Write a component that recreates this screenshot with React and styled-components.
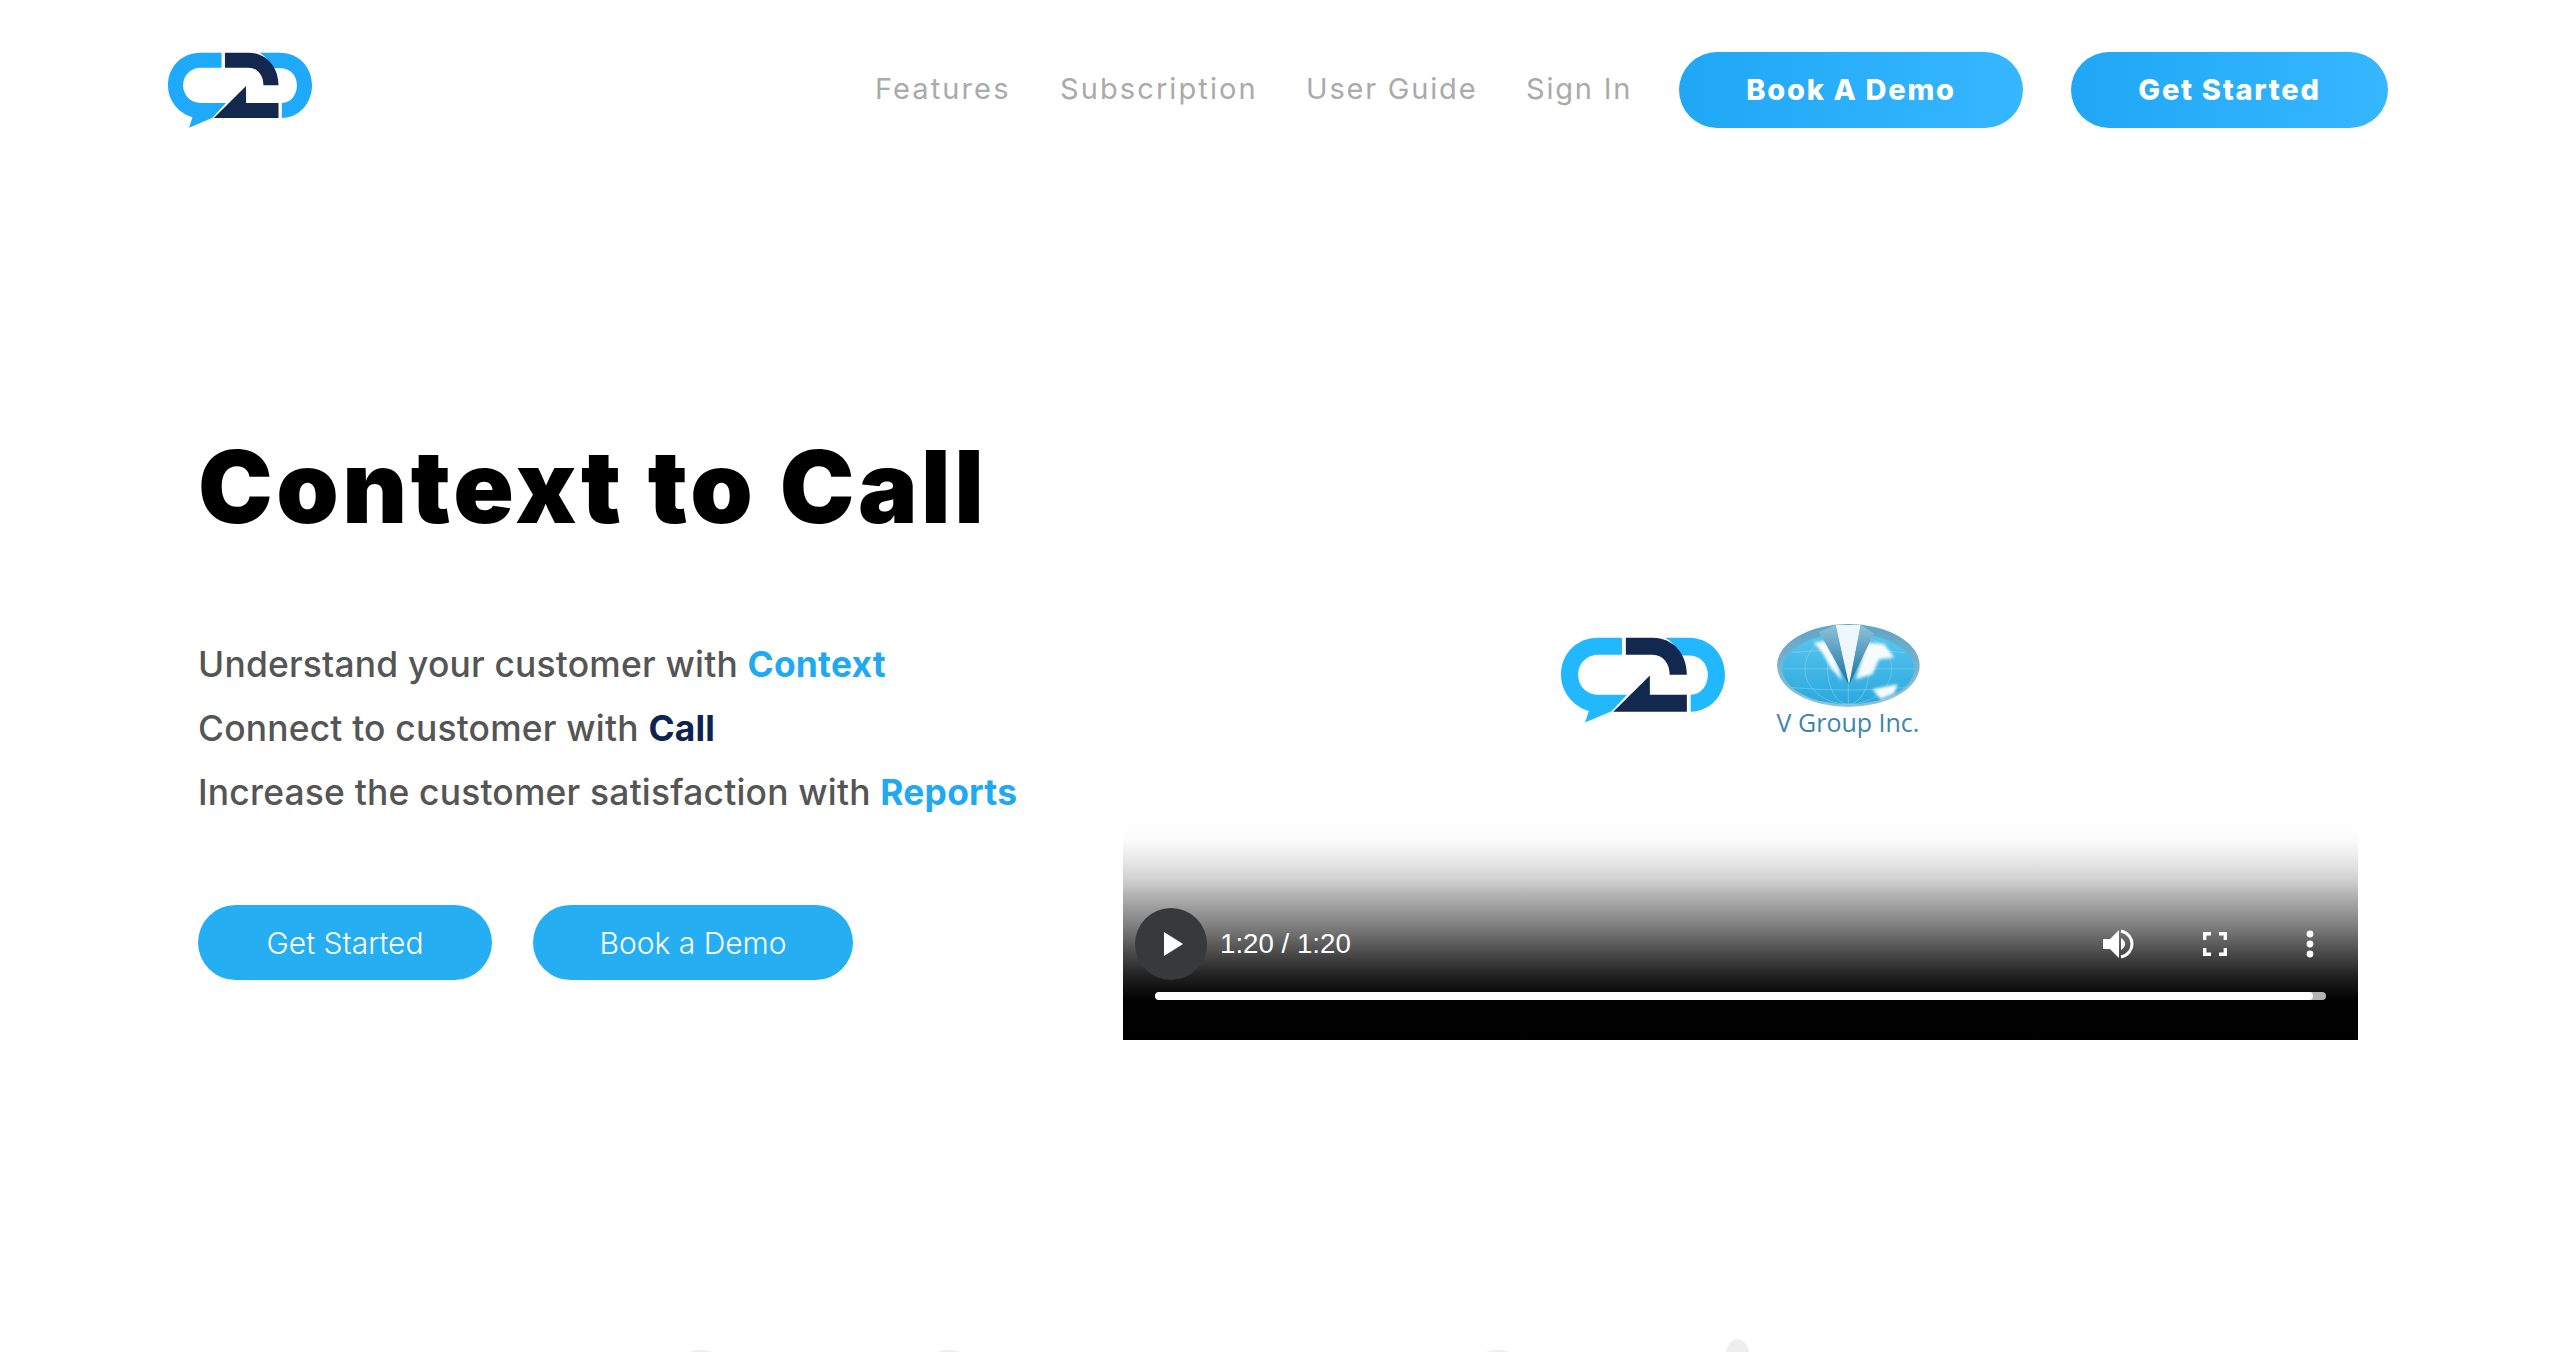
import React from "react";
import styled, { createGlobalStyle } from "styled-components";

const Global = createGlobalStyle`
  html, body { margin: 0; padding: 0; background: #fff; }
  body { font-family: Inter, "Open Sans", sans-serif; }
`;

const Page = styled.div`
  width: 2554px;
  height: 1352px;
  overflow: hidden;
  background: #fff;
  display: flex;
  flex-direction: column;
`;

const Header = styled.header`
  height: 76px;
  padding: 52px 166px 0 168px;
  display: flex;
  align-items: center;
  flex-shrink: 0;
`;

const Nav = styled.nav`
  margin-left: auto;
  display: flex;
  align-items: center;
`;

const NavLink = styled.a`
  font-size: 29px;
  line-height: 36px;
  margin-top: -3px;
  font-weight: 400;
  color: #aaa;
  letter-spacing: ${(p) => p.$ls}px;
  width: ${(p) => p.$w}px;
  margin-right: ${(p) => p.$mr}px;
  white-space: nowrap;
`;

const HeaderButton = styled.a`
  height: 76px;
  box-sizing: border-box;
  padding-bottom: 2px;
  width: ${(p) => p.$w}px;
  margin-left: ${(p) => p.$ml || 0}px;
  border-radius: 38px;
  background: linear-gradient(90deg, #1fa7f5, #36b7ff);
  color: #fff;
  font-size: 29px;
  font-weight: 800;
  letter-spacing: 1.7px;
  display: flex;
  align-items: center;
  justify-content: center;
`;

const Hero = styled.main`
  height: 912px;
  box-sizing: border-box;
  flex-shrink: 0;
  padding: 217px 196px 0 198px;
  display: flex;
  justify-content: space-between;
  align-items: flex-start;
`;

const Copy = styled.div`
  padding-top: 77px;
  display: flex;
  flex-direction: column;
`;

const Title = styled.h1`
  margin: 0 0 81px;
  font-size: 100px;
  line-height: 130px;
  font-weight: 900;
  color: #000;
  letter-spacing: 3.5px;
  white-space: nowrap;
`;

const Line = styled.p`
  margin: 0;
  height: 64px;
  line-height: 64px;
  font-size: 35.4px;
  font-weight: 500;
  color: #555;
  letter-spacing: ${(p) => p.$ls}px;
  white-space: nowrap;
`;

const Accent = styled.b`
  font-weight: 700;
  color: ${(p) => (p.$dark ? "#0f2350" : "#1fa9f3")};
`;

const Actions = styled.div`
  margin-top: 80px;
  display: flex;
  gap: 41px;
`;

const CtaButton = styled.a`
  height: 75px;
  width: ${(p) => p.$w}px;
  border-radius: 38px;
  background: #25aef2;
  color: #fff;
  font-size: 30px;
  font-weight: 300;
  display: flex;
  align-items: center;
  justify-content: center;
`;

const Video = styled.section`
  width: 1235px;
  height: 695px;
  display: flex;
  flex-direction: column;
  justify-content: space-between;
`;

const Logos = styled.div`
  padding-top: 279px;
  display: flex;
  justify-content: center;
  align-items: flex-start;
  gap: 51px;
`;

const BrandMark = styled.div`
  margin-top: 13px;
  line-height: 0;
`;

const PartnerLogo = styled.div`
  display: flex;
  flex-direction: column;
  align-items: center;
  width: 144px;
`;

const PartnerName = styled.span`
  font-family: "Open Sans", sans-serif;
  font-size: 25px;
  line-height: 30px;
  color: #3d86ab;
  white-space: nowrap;
`;

const Controls = styled.div`
  height: 220px;
  padding: 88px 32px 40px;
  box-sizing: border-box;
  display: flex;
  flex-direction: column;
  justify-content: space-between;
  background: linear-gradient(
    180deg,
    #fff 0,
    #fbfbfb 20px,
    #e8e8e8 40px,
    #d0d0d0 60px,
    #aaa 80px,
    #808080 105px,
    #505050 130px,
    #222 155px,
    #020202 180px,
    #000 220px
  );
`;

const ControlRow = styled.div`
  height: 72px;
  margin-left: -20px;
  display: flex;
  align-items: center;
  color: #fff;
`;

const PlayButton = styled.div`
  width: 72px;
  height: 72px;
  padding-left: 5px;
  box-sizing: border-box;
  border-radius: 50%;
  background: #38393b;
  display: flex;
  align-items: center;
  justify-content: center;
`;

const Time = styled.span`
  margin-left: 13px;
  font-family: "Liberation Sans", Arial, sans-serif;
  font-size: 27.7px;
  flex: 1;
`;

const IconSlot = styled.div`
  width: ${(p) => p.$w}px;
  margin-right: ${(p) => p.$mr}px;
  display: flex;
  align-items: center;
  justify-content: center;
`;

const Track = styled.div`
  height: 8px;
  border-radius: 4px;
  background: #b4b4b4;
  overflow: hidden;
`;

const Played = styled.div`
  height: 100%;
  border-radius: 4px;
  background: #fff;
`;

const NextSection = styled.div`
  flex: 1;
  display: flex;
  align-items: flex-start;
`;

const Bump = styled.div`
  width: ${(p) => p.$w}px;
  height: ${(p) => p.$h}px;
  margin-left: ${(p) => p.$ml}px;
  margin-top: ${(p) => p.$mt}px;
  border-radius: 50%;
  background: #eee;
  flex-shrink: 0;
`;

function Logo({ width, height, blue }) {
  return (
    <svg width={width} height={height} viewBox="85 95 430 228" preserveAspectRatio="none">
      <path
        fill={blue}
        d="M245 97 H182 C125 97 85 140 85 195 C85 240 115 278 158 291 L148 322 L218 292 L258 248 H182 C152 248 130 224 130 195 C130 166 152 142 182 142 H245 Z"
      />
      <path
        fill={blue}
        d="M358 97 H420 C475 97 515 140 515 195 C515 250 475 293 425 293 V248 C452 248 470 224 470 195 C470 165 450 144 420 144 H397 C387 122 375 106 358 97 Z"
      />
      <path fill="#12284f" d="M255 97 H325 C380 97 415 140 415 195 H370 C370 165 352 142 325 142 H255 Z" />
      <path fill="#12284f" d="M318 197 V248 H415 V293 H222 Z" />
    </svg>
  );
}

function Globe() {
  return (
    <svg width="143" height="83" viewBox="0 0 427 248">
      <defs>
        <linearGradient id="rim" x1="0" y1="0" x2="0" y2="1">
          <stop offset="0" stopColor="#5da4c6" />
          <stop offset="1" stopColor="#8fc3da" />
        </linearGradient>
        <linearGradient id="sea" x1="0" y1="0" x2="0" y2="1">
          <stop offset="0" stopColor="#58c6ee" />
          <stop offset="1" stopColor="#2aa8de" />
        </linearGradient>
        <linearGradient id="blade" x1="0" y1="0" x2="0" y2="1">
          <stop offset="0" stopColor="#8cc2da" />
          <stop offset="1" stopColor="#17709f" />
        </linearGradient>
        <filter id="soft"><feGaussianBlur stdDeviation="4" /></filter>
      </defs>
      <ellipse cx="213" cy="124" rx="213" ry="124" fill="url(#rim)" />
      <ellipse cx="213" cy="134" rx="197" ry="106" fill="url(#sea)" />
      <g stroke="#8fd6f2" strokeWidth="1.5" fill="none">
        <ellipse cx="213" cy="134" rx="130" ry="106" />
        <ellipse cx="213" cy="134" rx="62" ry="106" />
        <path d="M213 30 V240 M20 134 H408 M45 85 Q213 70 382 85 M45 190 Q213 205 382 190" />
      </g>
      <path fill="#eef8fc" d="M175 3 H250 L215 183 Z" />
      <g fill="#f6fbfd" filter="url(#soft)">
        <path d="M110 55 L160 50 L195 170 L160 130 L135 85 Z" />
        <path d="M262 55 L320 60 L350 100 L305 105 L285 150 L235 165 L255 100 Z" />
        <path d="M285 195 L360 180 L350 208 L310 225 Z" />
      </g>
      <path fill="url(#blade)" d="M125 23 L175 3 L215 183 Z" />
      <path fill="url(#blade)" d="M250 3 L290 28 L215 183 Z" />
    </svg>
  );
}

export default function App() {
  return (
    <Page>
      <Global />
      <Header>
        <Logo width={144} height={76} blue="#1fa9fb" />
        <Nav>
          <NavLink $w={136} $mr={49} $ls={2.1}>Features</NavLink>
          <NavLink $w={197} $mr={49} $ls={2.1}>Subscription</NavLink>
          <NavLink $w={170} $mr={50} $ls={1.8}>User Guide</NavLink>
          <NavLink $w={105} $mr={48} $ls={1.8}>Sign In</NavLink>
          <HeaderButton $w={344}>Book A Demo</HeaderButton>
          <HeaderButton $w={317} $ml={48}>Get Started</HeaderButton>
        </Nav>
      </Header>
      <Hero>
        <Copy>
          <Title>Context to Call</Title>
          <Line $ls={0.2}>Understand your customer with <Accent>Context</Accent></Line>
          <Line $ls={0.2}>Connect to customer with <Accent $dark>Call</Accent></Line>
          <Line $ls={0.2}>Increase the customer satisfaction with <Accent>Reports</Accent></Line>
          <Actions>
            <CtaButton $w={294}>Get Started</CtaButton>
            <CtaButton $w={320}>Book a Demo</CtaButton>
          </Actions>
        </Copy>
        <Video>
          <Logos>
            <BrandMark>
              <Logo width={164} height={86} blue="#22b8ff" />
            </BrandMark>
            <PartnerLogo>
              <Globe />
              <PartnerName>V Group Inc.</PartnerName>
            </PartnerLogo>
          </Logos>
          <Controls>
            <ControlRow>
              <PlayButton>
                <svg width="20" height="24" viewBox="0 0 20 24"><path fill="#fff" d="M0 0 L19 12 L0 24 Z" /></svg>
              </PlayButton>
              <Time>1:20 / 1:20</Time>
              <IconSlot $w={32} $mr={68}>
                <svg width="32" height="30" viewBox="0 0 32 30">
                  <path fill="#fff" d="M1 10 H8 L17 1 V29 L8 20 H1 Z" />
                  <path fill="#fff" d="M19 9 C22 11 23 13 23 15 C23 17 22 19 19 21 Z" />
                  <path fill="none" stroke="#fff" strokeWidth="3" d="M19 2 C27 4 30 10 30 15 C30 20 27 26 19 28" />
                </svg>
              </IconSlot>
              <IconSlot $w={26} $mr={78}>
                <svg width="24" height="24" viewBox="0 0 24 24" fill="none" stroke="#fff" strokeWidth="3.4">
                  <path d="M1.7 8 V1.7 H8 M16 1.7 H22.3 V8 M22.3 16 V22.3 H16 M8 22.3 H1.7 V16" />
                </svg>
              </IconSlot>
              <IconSlot $w={8} $mr={12}>
                <svg width="8" height="28" viewBox="0 0 8 28" fill="#fff">
                  <circle cx="4" cy="4" r="3.4" /><circle cx="4" cy="14" r="3.4" /><circle cx="4" cy="24" r="3.4" />
                </svg>
              </IconSlot>
            </ControlRow>
            <Track><Played style={{ width: "98.9%" }} /></Track>
          </Controls>
        </Video>
      </Hero>
      <NextSection>
        <Bump $w={27} $h={8} $ml={687} $mt={310} />
        <Bump $w={27} $h={8} $ml={221} $mt={310} />
        <Bump $w={27} $h={8} $ml={522} $mt={310} />
        <Bump $w={25} $h={40} $ml={214} $mt={299} />
      </NextSection>
    </Page>
  );
}
